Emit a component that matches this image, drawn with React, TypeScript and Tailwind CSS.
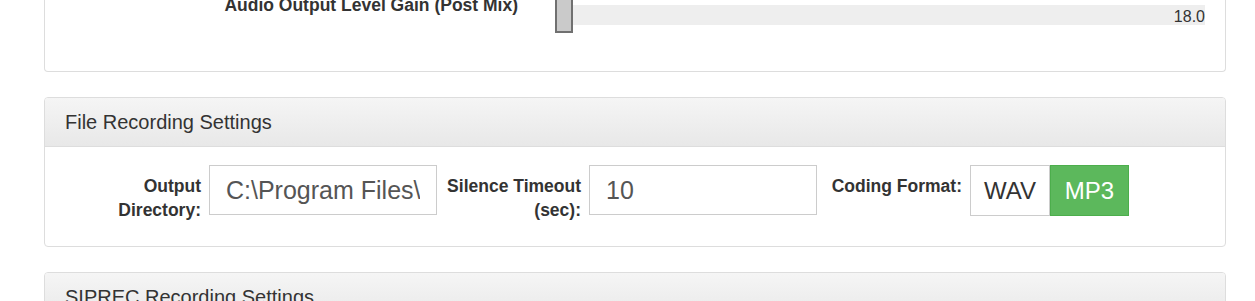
import { useState } from "react";

const Panel = ({ title, children }: any) => {
  return (
    <div className="mt-[25px] border border-[#ddd] rounded-[4px] bg-white overflow-hidden">
      <div className="h-[49px] flex items-center px-[20px] border-b border-[#ddd] bg-gradient-to-b from-[#f5f5f5] to-[#e8e8e8]">
        <h3 className="text-[20px] leading-[22px] text-[#333]">{title}</h3>
      </div>
      {children}
    </div>
  );
};

const FieldLabel = ({ children }: any) => (
  <label className="block w-[136px] shrink-0 pt-[9px] text-right text-[17.5px] leading-[24px] font-bold text-[#333]">
    {children}
  </label>
);

const App = () => {
  const [outputDir, setOutputDir] = useState("C:\\Program Files\\");
  const [timeout, setTimeoutVal] = useState("10");
  const [format, setFormat] = useState("MP3");

  return (
    <div
      className="w-[1255px] h-[301px] overflow-hidden bg-white"
      style={{ fontFamily: '"Liberation Sans", Arial, sans-serif' }}
    >
      <div className="ml-[44px] w-[1182px]">
        {/* Mixer panel, top cut off */}
        <div className="h-[72px] border-x border-b border-[#ddd] rounded-b-[4px] bg-white">
          <div className="flex items-start pr-[20px]">
            <div className="w-[473px] shrink-0 -mt-[7px] text-right text-[17.5px] leading-[24px] font-bold text-[#333]">
              Audio Output Level Gain (Post Mix)
            </div>
            <div className="ml-[37px] flex-1 relative mt-[5px] h-[20px] bg-[#eee] flex justify-end">
              <span className="mt-[4px] text-[16px] leading-[16px] text-[#333]">18.0</span>
              <div className="absolute left-0 -top-[20px] w-[18px] h-[48px] border-2 border-[#707070] bg-[#cacaca]" />
            </div>
          </div>
        </div>

        <Panel title="File Recording Settings">
          <div className="h-[99px] pt-[18px] pl-[20px] flex items-start">
            <FieldLabel>Output Directory:</FieldLabel>
            <input
              value={outputDir}
              onChange={(e) => setOutputDir(e.target.value)}
              className="ml-[8px] w-[228px] h-[50px] border border-[#ccc] px-[16px] text-[25px] text-[#555] outline-none"
            />
            <div className="ml-[8px]">
              <FieldLabel>Silence Timeout (sec):</FieldLabel>
            </div>
            <input
              value={timeout}
              onChange={(e) => setTimeoutVal(e.target.value)}
              className="ml-[8px] w-[228px] h-[50px] border border-[#ccc] px-[16px] text-[25px] text-[#555] outline-none"
            />
            <div className="ml-[9px]">
              <FieldLabel>Coding Format:</FieldLabel>
            </div>
            <div className="ml-[8px] flex h-[51px]">
              <button
                onClick={() => setFormat("WAV")}
                className={`w-[80px] h-full border text-[24px] ${format === "WAV"
                  ? "bg-[#5cb85c] border-[#4cae4c] text-white"
                  : "bg-white border-[#ccc] text-[#333]"
                  }`}
              >
                WAV
              </button>
              <button
                onClick={() => setFormat("MP3")}
                className={`w-[79px] h-full border text-[24px] ${format === "MP3"
                  ? "bg-[#5cb85c] border-[#4cae4c] text-white"
                  : "bg-white border-[#ccc] text-[#333]"
                  }`}
              >
                MP3
              </button>
            </div>
          </div>
        </Panel>

        <Panel title="SIPREC Recording Settings">
          <div className="h-[100px]" />
        </Panel>
      </div>
    </div>
  );
};

export default App;
